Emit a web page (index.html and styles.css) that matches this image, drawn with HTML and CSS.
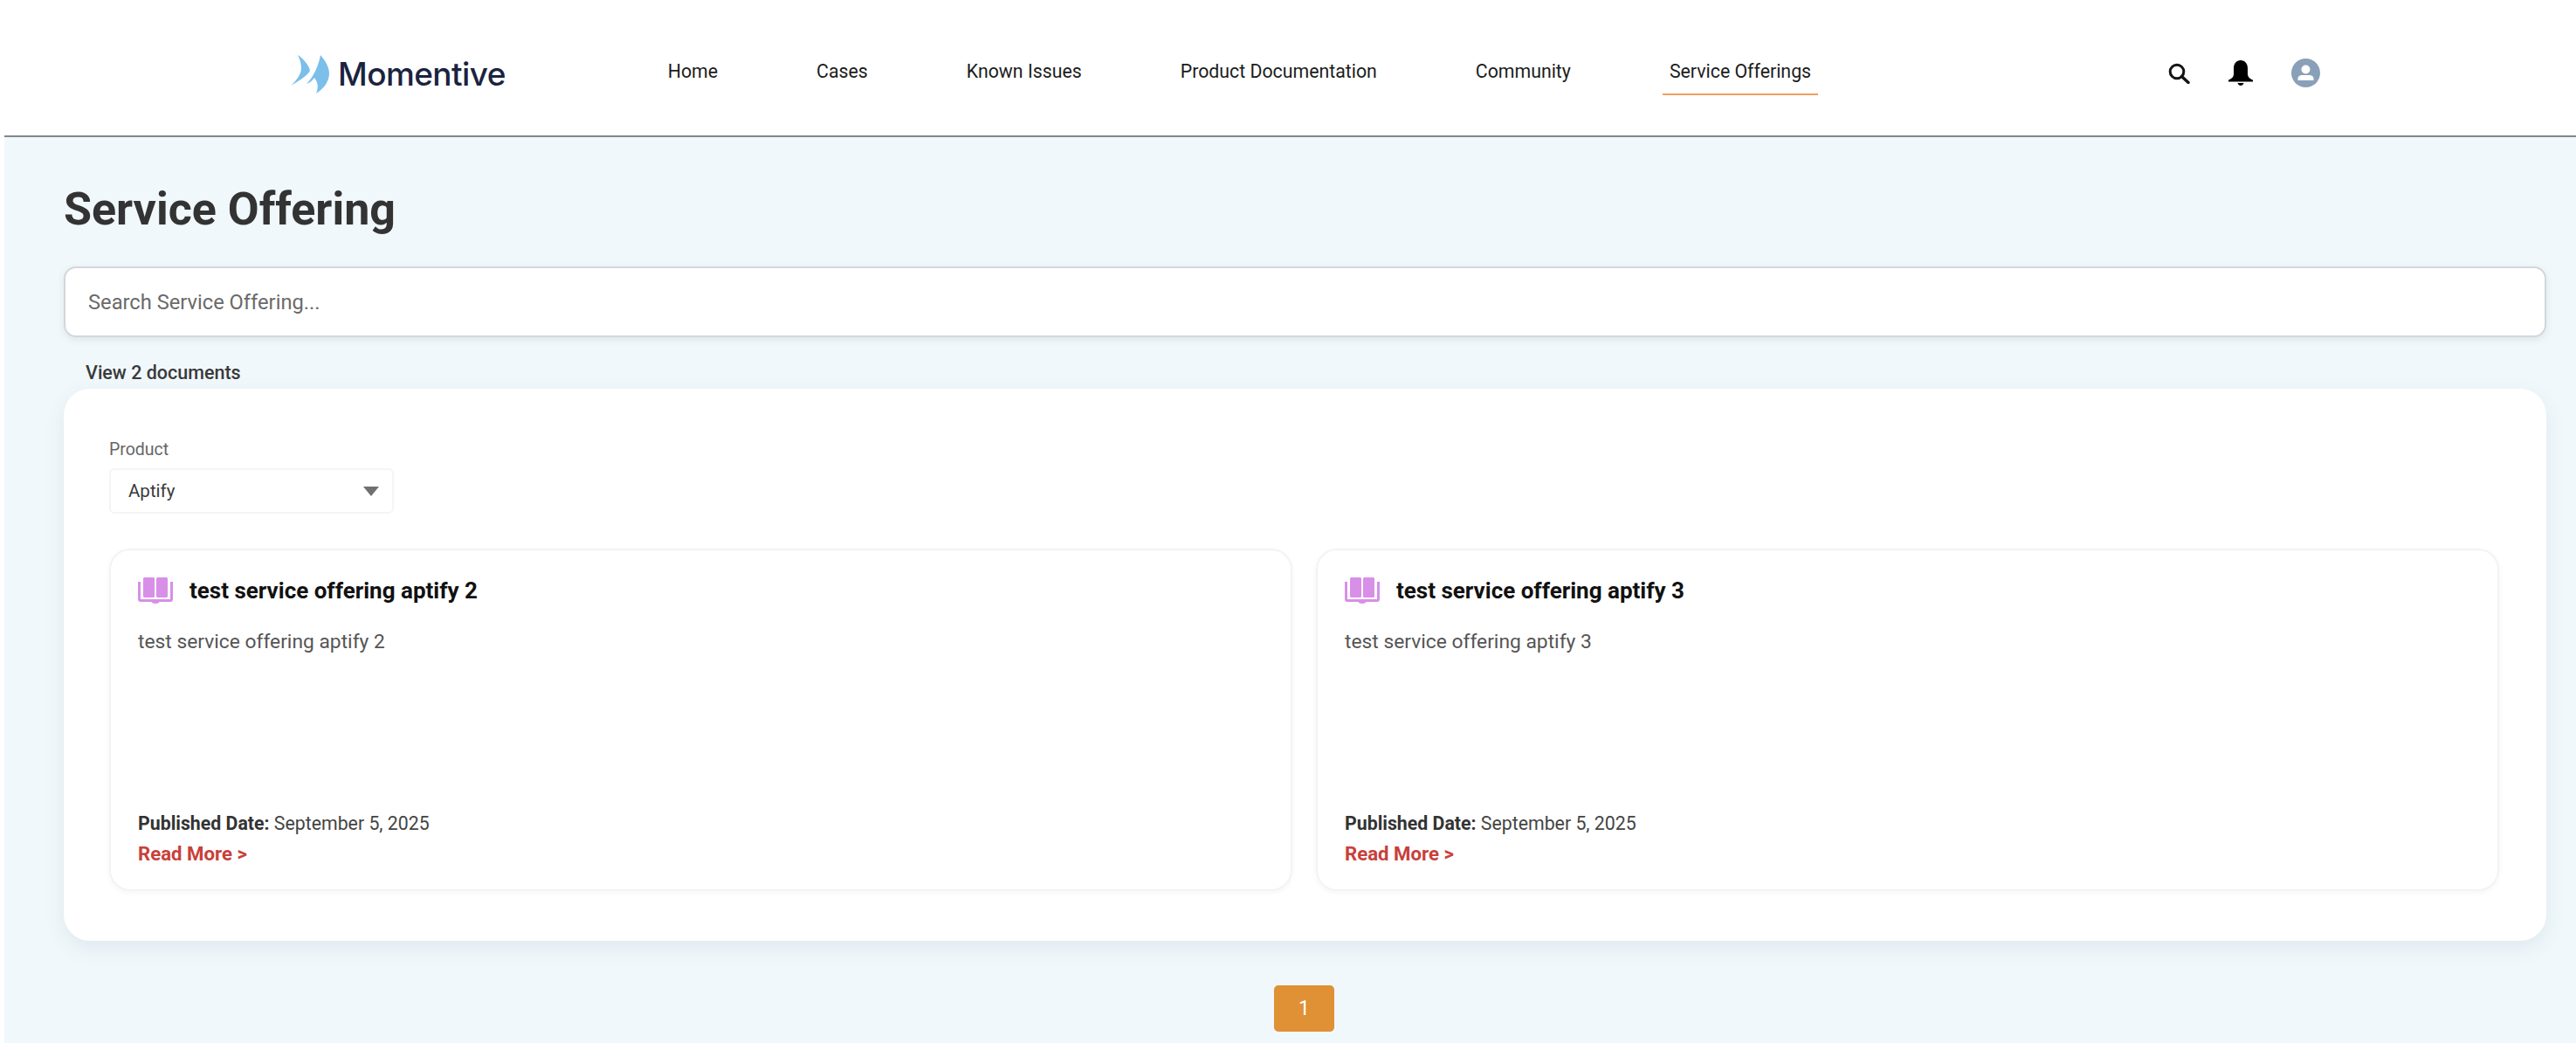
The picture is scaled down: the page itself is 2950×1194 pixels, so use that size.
FILE: index.html
```html
<!DOCTYPE html>
<html lang="en">
<head>
<meta charset="utf-8">
<title>Service Offering</title>
<link rel="stylesheet" href="styles.css">
</head>
<body>
<header class="topbar">
  <a class="logo">
    <svg class="logo-mark" viewBox="0 0 44 44" width="44" height="44"><path fill="#7cbfea" d="M8 0C12 2 21 11 22 18C20 22 14 27 0 35C6 30 12 22 12 15C12 9 10 4 8 0Z"/><path fill="#7cbfea" d="M34 0C40 7 44 14 44 21C44 31 37 39 29 44C32 37 31 31 27 26C24 30 21 32 18 33C26 25 32 12 34 0Z"/></svg>
    <span class="logo-text">Momentive</span>
  </a>
  <nav class="nav">
    <a class="nav-link">Home</a>
    <a class="nav-link">Cases</a>
    <a class="nav-link">Known Issues</a>
    <a class="nav-link">Product Documentation</a>
    <a class="nav-link">Community</a>
    <a class="nav-link active">Service Offerings</a>
  </nav>
  <div class="actions">
    <svg class="icon-search" viewBox="0 0 25 24" width="25" height="24"><circle cx="10" cy="10" r="7.8" fill="none" stroke="#141414" stroke-width="3"/><path d="M15.5 15.5L23 22.5" stroke="#141414" stroke-width="3.4" stroke-linecap="round"/></svg>
    <svg class="icon-bell" viewBox="0 0 30 29" width="30" height="29"><path fill="#000" d="M15 0C20 0 23 4 23 9V15C23 19 25 21 29 22.5V24.5H1V22.5C5 21 7 19 7 15V9C7 4 10 0 15 0Z"/><path fill="#000" d="M11.5 26H18.5C18 28 16.500 29 15 29C13.500 29 12 28 11.500 26Z"/></svg>
    <svg class="icon-user" viewBox="0 0 33 33" width="33" height="33"><circle cx="16.500" cy="16.500" r="16.500" fill="#8aa0b8"/><circle cx="16.500" cy="12.500" r="5" fill="#fff"/><path fill="#fff" d="M7.500 25V23C7.500 20 10 19 13 19H20C23 19 25.500 20 25.500 23V25Z"/></svg>
  </div>
</header>

<main class="page">
  <h1 class="title">Service Offering</h1>
  <div class="search">Search Service Offering...</div>
  <p class="count">View 2 documents</p>

  <section class="panel">
    <div class="field-label">Product</div>
    <div class="select">
      <span>Aptify</span>
      <span class="caret"></span>
    </div>
    <div class="cards">
      <article class="card">
        <div class="card-head">
          <svg class="book" viewBox="0 0 40 30" width="40" height="30"><path fill="#d88fe8" d="M6 1.500C6 .7 6.700 0 7.500 0H17.500C18.300 0 19 .7 19 1.500V21.500C19 22.300 18.300 23 17.500 23H7.500C6.700 23 6 22.300 6 21.500Z"/><path fill="#d88fe8" d="M21 1.500C21 .7 21.700 0 22.500 0H32.500C33.300 0 34 .7 34 1.500V21.500C34 22.300 33.300 23 32.500 23H22.500C21.700 23 21 22.300 21 21.500Z"/><path fill="none" stroke="#d88fe8" stroke-width="3" d="M1.500 5V25C1.500 26 2 26.500 3 26.500H37C38 26.500 38.500 26 38.500 25V5"/><path fill="#d88fe8" d="M15 27H25C24.500 29 23 30 20 30C17 30 15.500 29 15 27Z"/></svg>
          <h2 class="card-title">test service offering aptify 2</h2>
        </div>
        <p class="card-body">test service offering aptify 2</p>
        <div class="card-foot">
          <div class="date"><b>Published Date:</b> September 5, 2025</div>
          <a class="more">Read More &gt;</a>
        </div>
      </article>
      <article class="card">
        <div class="card-head">
          <svg class="book" viewBox="0 0 40 30" width="40" height="30"><path fill="#d88fe8" d="M6 1.500C6 .7 6.700 0 7.500 0H17.500C18.300 0 19 .7 19 1.500V21.500C19 22.300 18.300 23 17.500 23H7.500C6.700 23 6 22.300 6 21.500Z"/><path fill="#d88fe8" d="M21 1.500C21 .7 21.700 0 22.500 0H32.500C33.300 0 34 .7 34 1.500V21.500C34 22.300 33.300 23 32.500 23H22.500C21.700 23 21 22.300 21 21.500Z"/><path fill="none" stroke="#d88fe8" stroke-width="3" d="M1.500 5V25C1.500 26 2 26.500 3 26.500H37C38 26.500 38.500 26 38.500 25V5"/><path fill="#d88fe8" d="M15 27H25C24.500 29 23 30 20 30C17 30 15.500 29 15 27Z"/></svg>
          <h2 class="card-title">test service offering aptify 3</h2>
        </div>
        <p class="card-body">test service offering aptify 3</p>
        <div class="card-foot">
          <div class="date"><b>Published Date:</b> September 5, 2025</div>
          <a class="more">Read More &gt;</a>
        </div>
      </article>
    </div>
  </section>

  <div class="pager"><span class="page-btn">1</span></div>
</main>
</body>
</html>
```

FILE: styles.css
```css
* { box-sizing: border-box; }
html, body { margin: 0; height: 100%; }
body {
  background: #fff;
  font-family: Roboto, "Liberation Sans", sans-serif;
  color: #333;
  overflow: hidden;
}

.topbar {
  height: 155px;
  display: flex;
  align-items: flex-start;
  padding-left: 333px;
}
.logo {
  display: flex;
  align-items: center;
  gap: 10px;
  margin-top: 63px;
  height: 44px;
}
.logo-mark { flex: none; }
.logo-text {
  font-family: Inter, "Open Sans", sans-serif;
  font-weight: 500;
  font-size: 37px;
  line-height: 44px;
  letter-spacing: -0.6px;
  color: #1a2340;
}
.nav {
  display: flex;
  gap: 113px;
  margin-left: 186px;
  margin-top: 65px;
}
.nav-link {
  display: block;
  padding: 0 0 9px;
  font-size: 21.3px;
  line-height: 33px;
  color: #1c1c1c;
  border-bottom: 2px solid transparent;
}
.nav-link.active {
  margin: 0 -8px;
  padding: 0 8px 9px;
  border-bottom-color: #f0a060;
}
.actions {
  display: flex;
  align-items: center;
  margin-left: 409px;
  margin-top: 67px;
  height: 33px;
}
.icon-bell { margin-left: 43px; }
.icon-user { margin-left: 43px; }

.page {
  margin-left: 5px;
  height: calc(100vh - 155px);
  border-top: 2px solid #80878e;
  background: #f0f8fb;
  padding: 53px 34px 0 68px;
}
.title {
  margin: 0 0 35px;
  font-size: 52px;
  line-height: 60px;
  font-weight: 700;
  color: #333;
}
.search {
  height: 81px;
  display: flex;
  align-items: center;
  padding: 0 25px 0 26px;
  background: #fff;
  border: 2px solid #d3d7db;
  border-radius: 14px;
  box-shadow: 0 3px 8px rgba(60, 80, 90, 0.1);
  font-size: 23.7px;
  color: #6a6a6a;
}
.count {
  margin: 28px 0 5px 25px;
  font-size: 21.5px;
  line-height: 26px;
  font-weight: 500;
  color: #3a3a3a;
}
.panel {
  height: 632px;
  padding: 58px 54px 0 52px;
  background: #fff;
  border-radius: 30px;
  box-shadow: 0 8px 24px rgba(60, 90, 110, 0.09);
}
.field-label {
  font-size: 19.5px;
  line-height: 24px;
  color: #666;
}
.select {
  width: 326px;
  height: 52px;
  margin-top: 9px;
  display: flex;
  align-items: center;
  justify-content: space-between;
  padding: 0 15px 0 20px;
  border: 2px solid #f5f5f5;
  border-radius: 6px;
  font-size: 20.5px;
  color: #3a3a3a;
}
.caret {
  width: 0;
  height: 0;
  border-left: 9px solid transparent;
  border-right: 9px solid transparent;
  border-top: 11px solid #707070;
}
.cards {
  display: grid;
  grid-template-columns: 1fr 1fr;
  gap: 27px;
  margin-top: 40px;
}
.card {
  height: 392px;
  display: flex;
  flex-direction: column;
  padding: 31px 32px 24px 31px;
  border: 2px solid #f3f3f3;
  border-radius: 24px;
  box-shadow: 0 2px 6px rgba(0, 0, 0, 0.04);
}
.card-head {
  display: flex;
  align-items: center;
  gap: 19px;
  height: 30px;
}
.book { flex: none; }
.card-title {
  margin: 0;
  font-size: 26px;
  line-height: 34px;
  font-weight: 700;
  color: #111;
}
.card-body {
  margin: 29px 0 0;
  font-size: 22.8px;
  line-height: 30px;
  color: #555;
}
.card-foot { margin-top: auto; }
.date {
  font-size: 21.3px;
  line-height: 34px;
  color: #444;
}
.date b { font-weight: 700; color: #333; }
.more {
  display: block;
  font-size: 22.2px;
  line-height: 34px;
  font-weight: 700;
  color: #c8403a;
}
.pager {
  display: flex;
  justify-content: center;
  margin-top: 51px;
}
.page-btn {
  width: 69px;
  height: 53px;
  display: flex;
  align-items: center;
  justify-content: center;
  background: #e09035;
  border-radius: 5px;
  font-size: 23px;
  color: #fff;
  margin-left: -2px;
}
```
